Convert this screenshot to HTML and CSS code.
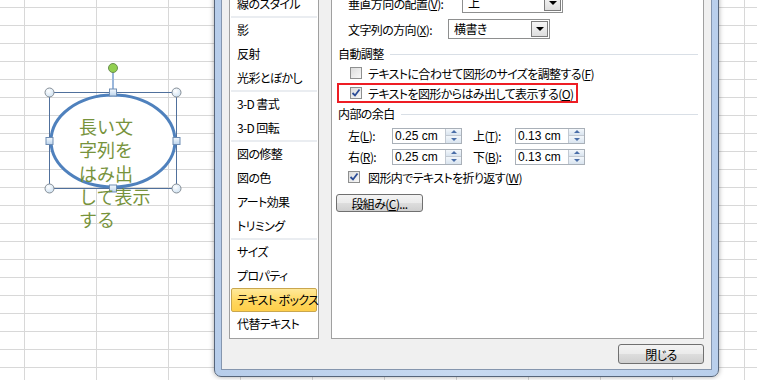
FILE: index.html
```html
<!DOCTYPE html>
<html lang="ja">
<head>
<meta charset="utf-8">
<title>図形の書式設定</title>
<link rel="stylesheet" href="styles.css">
</head>
<body>
<div class="sheet">
  <div class="shape">
    <svg class="shape-svg" width="200" height="240" viewBox="0 0 200 240">
      <defs>
        <radialGradient id="hg" cx=".4" cy=".35" r=".75">
          <stop offset="0" stop-color="#ffffff"/>
          <stop offset="1" stop-color="#c9def0"/>
        </radialGradient>
        <linearGradient id="sg" x1="0" y1="0" x2="0" y2="1">
          <stop offset="0" stop-color="#f4f9fe"/>
          <stop offset="1" stop-color="#bcd4ec"/>
        </linearGradient>
      </defs>
      <ellipse cx="113" cy="141" rx="62" ry="46" fill="#ffffff" stroke="#4f81bd" stroke-width="3"/>
      <rect x="49.5" y="92.5" width="127" height="96" fill="none" stroke="#50709c" stroke-width="1"/>
      <line x1="113" y1="72" x2="113" y2="89" stroke="#9ab7dc" stroke-width="2"/>
      <circle cx="113" cy="68" r="4.5" fill="#92d050" stroke="#6c8f52"/>
      <circle cx="49.5" cy="92.5" r="4.5" fill="url(#hg)" stroke="#868e96"/>
      <circle cx="176.5" cy="92.5" r="4.5" fill="url(#hg)" stroke="#868e96"/>
      <circle cx="49.5" cy="188.5" r="4.5" fill="url(#hg)" stroke="#868e96"/>
      <circle cx="176.5" cy="188.5" r="4.5" fill="url(#hg)" stroke="#868e96"/>
      <rect x="109.5" y="89" width="7" height="7" fill="url(#sg)" stroke="#6f8db3"/>
      <rect x="109.5" y="185" width="7" height="7" fill="url(#sg)" stroke="#6f8db3"/>
      <rect x="46" y="137.5" width="7" height="7" fill="url(#sg)" stroke="#6f8db3"/>
      <rect x="173" y="137.5" width="7" height="7" fill="url(#sg)" stroke="#6f8db3"/>
    </svg>
    <div class="shape-text">長い文<br>字列を<br>はみ出<br>して表示<br>する</div>
  </div>

  <div class="dialog">
    <div class="dlg-body">
      <div class="panes">
        <ul class="nav">
          <li>線のスタイル</li>
          <li class="sep"></li>
          <li>影</li>
          <li>反射</li>
          <li>光彩とぼかし</li>
          <li class="sep"></li>
          <li>3-D 書式</li>
          <li>3-D 回転</li>
          <li class="sep"></li>
          <li>図の修整</li>
          <li>図の色</li>
          <li>アート効果</li>
          <li>トリミング</li>
          <li class="sep"></li>
          <li>サイズ</li>
          <li>プロパティ</li>
          <li class="active">テキスト ボックス</li>
          <li>代替テキスト</li>
        </ul>

        <div class="content">
          <div class="row row-first">
            <span class="lbl lbl-v">垂直方向の配置(<u>V</u>):</span>
            <div class="select sel-v"><span class="val">上</span><span class="arrow"></span></div>
          </div>
          <div class="row row-second">
            <span class="lbl lbl-x">文字列の方向(<u>X</u>):</span>
            <div class="select sel-x"><span class="val">横書き</span><span class="arrow"></span></div>
          </div>

          <div class="heading head-auto"><span>自動調整</span><i class="rule"></i></div>
          <div class="check check-fit"><span class="box"></span><span>テキストに合わせて図形のサイズを調整する(<u>F</u>)</span></div>
          <div class="check check-over">
            <span class="box checked"><svg width="10" height="10" viewBox="0 0 10 10"><path d="M1.5 5 L4 7.5 L8.5 1.5" fill="none" stroke="#2b4c96" stroke-width="1.8"/></svg></span>
            <span>テキストを図形からはみ出して表示する(<u>O</u>)</span>
          </div>

          <div class="heading head-margin"><span>内部の余白</span><i class="rule"></i></div>
          <div class="spin-row spin-first">
            <span class="slbl">左(<u>L</u>):</span>
            <div class="spin"><span class="val">0.25 cm</span><span class="arrows"><i class="up"></i><i class="down"></i></span></div>
            <span class="slbl slbl-r">上(<u>T</u>):</span>
            <div class="spin"><span class="val">0.13 cm</span><span class="arrows"><i class="up"></i><i class="down"></i></span></div>
          </div>
          <div class="spin-row">
            <span class="slbl">右(<u>R</u>):</span>
            <div class="spin"><span class="val">0.25 cm</span><span class="arrows"><i class="up"></i><i class="down"></i></span></div>
            <span class="slbl slbl-r">下(<u>B</u>):</span>
            <div class="spin"><span class="val">0.13 cm</span><span class="arrows"><i class="up"></i><i class="down"></i></span></div>
          </div>
          <div class="check check-wrap">
            <span class="box checked"><svg width="10" height="10" viewBox="0 0 10 10"><path d="M1.5 5 L4 7.5 L8.5 1.5" fill="none" stroke="#2b4c96" stroke-width="1.8"/></svg></span>
            <span>図形内でテキストを折り返す(<u>W</u>)</span>
          </div>
          <div class="btn btn-cols">段組み(<u>C</u>)...</div>
        </div>
      </div>
      <div class="footer">
        <div class="btn btn-close">閉じる</div>
      </div>
    </div>
  </div>
</div>
</body>
</html>
```

FILE: styles.css
```css
html, body {
  margin: 0;
  padding: 0;
}
body {
  width: 757px;
  height: 380px;
  overflow: hidden;
  font-family: "Noto Sans CJK JP", "Noto Sans", sans-serif;
  font-size: 12px;
  color: #000;
}
.sheet {
  position: relative;
  width: 757px;
  height: 380px;
  background-color: #fff;
  background-image:
    linear-gradient(to right, #d8d8d8 1px, transparent 1px),
    linear-gradient(to bottom, #d8d8d8 1px, transparent 1px);
  background-size: 72px 100%, 100% 18px;
  background-position: 24px 0, 0 7px;
}

/* shape on the sheet canvas */
.shape {
  position: absolute;
  left: 0;
  top: 0;
  width: 200px;
  height: 240px;
}
.shape-svg {
  position: absolute;
  left: 0;
  top: 0;
}
.shape-text {
  position: absolute;
  left: 79px;
  top: 115px;
  font-size: 18px;
  line-height: 23.3px;
  color: #77933c;
  white-space: nowrap;
}

/* dialog window */
.dialog {
  position: absolute;
  left: 214px;
  top: -20px;
  width: 505px;
  height: 397px;
  box-sizing: border-box;
  border: 1px solid #56657a;
  border-radius: 0 0 7px 7px;
  padding: 6px;
  background: linear-gradient(to right, #b7cdea, #c8daf1 50%, #b9cfec);
  box-shadow: 0 0 5px rgba(0, 0, 0, 0.35);
}
.dlg-body {
  box-sizing: border-box;
  height: 100%;
  border: 1px solid #8596ae;
  background: #f0f0f0;
  padding: 2px 7px 0 7px;
  display: flex;
  flex-direction: column;
  font-feature-settings: "palt";
  letter-spacing: -0.6px;
}
.panes {
  display: flex;
  gap: 12px;
  height: 349px;
}

/* left navigation list */
.nav {
  width: 90px;
  box-sizing: border-box;
  margin: 0;
  padding: 1px;
  list-style: none;
  border: 1px solid #a0a0a0;
  background: #fff;
}
.nav li {
  height: 24px;
  line-height: 24px;
  padding-left: 6px;
  white-space: nowrap;
  box-sizing: border-box;
}
.nav li.sep {
  height: 2px;
  padding: 0;
  background: #eaedf1;
}
.nav li.active {
  background: linear-gradient(#ffe99a, #ffd65c 60%, #ffcf4a);
  border: 1px solid #c9a64e;
  border-radius: 2px;
  padding-left: 5px;
  line-height: 22px;
}

/* right content panel */
.content {
  width: 373px;
  box-sizing: border-box;
  border: 1px solid #a0a0a0;
  background: #fff;
  display: flex;
  flex-direction: column;
  padding-right: 5px;
}
.row {
  display: flex;
  align-items: center;
  height: 24px;
  padding-left: 16px;
}
.row-second {
  margin-top: 2px;
}
.lbl-v {
  width: 114px;
}
.lbl-x {
  width: 100px;
}
.select {
  box-sizing: border-box;
  height: 20px;
  border: 1px solid #8e8f8f;
  background: #fff;
  display: flex;
  align-items: stretch;
  justify-content: space-between;
}
.sel-v {
  width: 101px;
}
.sel-x {
  width: 102px;
}
.select .val {
  padding-left: 5px;
  line-height: 18px;
}
.select .arrow {
  width: 17px;
  margin: 1px;
  box-sizing: border-box;
  border: 1px solid #7c7c7c;
  background: linear-gradient(#f6f6f6, #dedede);
  display: flex;
  align-items: center;
  justify-content: center;
}
.select .arrow::after {
  content: "";
  border-left: 4px solid transparent;
  border-right: 4px solid transparent;
  border-top: 4px solid #000;
}

.heading {
  display: flex;
  align-items: center;
  height: 18px;
  padding-left: 6px;
}
.head-auto {
  margin-top: 3px;
}
.head-margin {
  margin-top: 1px;
}
.heading .rule {
  flex: 1;
  height: 1px;
  margin-left: 6px;
  margin-top: 3px;
  background: #d9dfe6;
}

.check {
  display: flex;
  align-items: center;
  height: 18px;
  white-space: nowrap;
}
.check .box {
  width: 12px;
  height: 12px;
  box-sizing: border-box;
  border: 1px solid #8e8f8f;
  background: linear-gradient(135deg, #dcdcdc, #f8f8f8);
  margin-right: 6px;
  display: flex;
  align-items: center;
  justify-content: center;
  flex: none;
}
.check-fit {
  margin-top: 2px;
  padding-left: 18px;
}
.check-over {
  margin-top: 1px;
  margin-left: 5px;
  width: 241px;
  height: 20px;
  box-sizing: border-box;
  border: 2px solid #ee1d24;
  padding-left: 11px;
}
.check-wrap {
  margin-top: 1px;
  padding-left: 16px;
}
.check-wrap .box {
  margin-right: 8px;
}

.spin-row {
  display: flex;
  align-items: center;
  height: 21px;
  padding-left: 16px;
}
.spin-first {
  margin-top: 3px;
}
.slbl {
  width: 44px;
}
.slbl-r {
  width: 42px;
  margin-left: 11px;
}
.spin {
  width: 70px;
  height: 16px;
  box-sizing: border-box;
  border: 1px solid #a9b0b8;
  background: #fff;
  display: flex;
}
.spin .val {
  flex: 1;
  padding-left: 2px;
  line-height: 14px;
  letter-spacing: 0;
  font-family: "Liberation Sans", "Noto Sans", sans-serif;
}
.spin .arrows {
  width: 15px;
  display: flex;
  flex-direction: column;
  border-left: 1px solid #c2c9d2;
}
.spin .arrows i {
  flex: 1;
  display: flex;
  align-items: center;
  justify-content: center;
  background: linear-gradient(#f3f7fb, #d9e4ef);
  border-bottom: 1px solid #c2c9d2;
}
.spin .arrows i:last-child {
  border-bottom: none;
}
.spin .arrows i.up::after {
  content: "";
  border-left: 3px solid transparent;
  border-right: 3px solid transparent;
  border-bottom: 3px solid #4a6ea8;
}
.spin .arrows i.down::after {
  content: "";
  border-left: 3px solid transparent;
  border-right: 3px solid transparent;
  border-top: 3px solid #4a6ea8;
}

.btn {
  box-sizing: border-box;
  border: 1px solid #707070;
  border-radius: 3px;
  background: linear-gradient(#f3f3f3 0%, #ebebeb 48%, #dddddd 52%, #cfcfcf 100%);
  display: flex;
  align-items: center;
  justify-content: center;
  white-space: nowrap;
}
.btn-cols {
  margin-top: 8px;
  margin-left: 4px;
  width: 87px;
  height: 18px;
}
.footer {
  display: flex;
  justify-content: flex-end;
  margin-top: 5px;
}
.btn-close {
  width: 86px;
  height: 20px;
}
```
